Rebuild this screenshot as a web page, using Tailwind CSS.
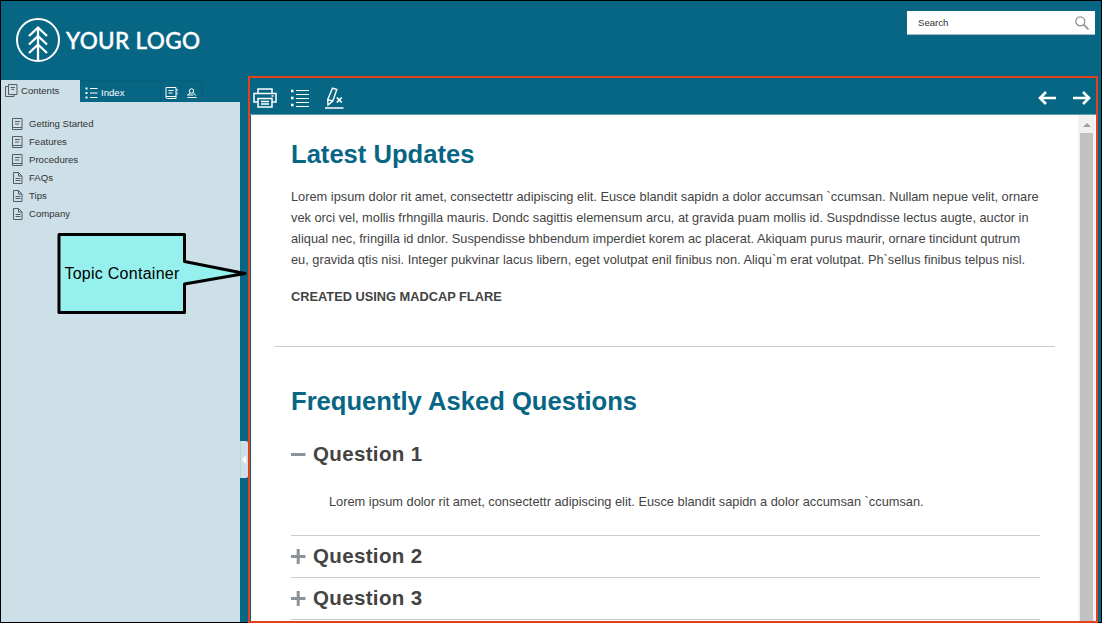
<!DOCTYPE html>
<html lang="en">
<head>
<meta charset="utf-8">
<title>Your Logo - Help</title>
<script src="https://cdn.jsdelivr.net/npm/@tailwindcss/browser@4"></script>
</head>
<body class="w-[1102px] h-[623px] overflow-hidden font-['Liberation_Sans',Arial,sans-serif]">
<div class="relative flex w-[1102px] h-[623px] bg-[#086685] border border-black">
  <!-- Left column: logo, tabs, table of contents -->
  <div class="w-[247px] h-full shrink-0 flex flex-col">
    <div class="h-[79px] shrink-0 flex items-center pl-[14px] pb-[2px] gap-[5px]">
      <svg class="w-[46px] h-[46px] shrink-0" viewBox="0 0 46 46" fill="none" stroke="#fff" stroke-width="2">
        <circle cx="23" cy="23" r="21"/>
        <path d="M23 10v34M14 19L23 10.500l9 8.500M14 27.500L23 19l9 8.500M14 36L23 27.500l9 8.500" stroke-width="2.300"/>
      </svg>
      <span class="font-['Lato',sans-serif] font-medium text-[22.500px] leading-none text-white whitespace-nowrap tracking-[0.350px] [-webkit-text-stroke:0.4px_#fff] mt-[3px]">YOUR LOGO</span>
    </div>
    <div class="h-[22px] shrink-0 flex">
      <div class="w-[79px] bg-[#cddfe7] flex items-center pl-1 gap-[3px] text-[#333]">
        <svg class="w-[13px] h-[14px] shrink-0" viewBox="0 0 13 14" fill="none" stroke="#555d63"><path d="M3.500.5h8.500v10h-8.500zM3 2.500H.5v10h8.500V11M5.500 3.500h4.500M6.500 5.500h2.500"/></svg>
        <span class="text-[9.600px]">Contents</span>
      </div>
      <div class="w-[81px] flex items-center pl-[5px] pt-[4px] gap-[3px] text-white shadow-[inset_-1px_1px_1px_#075f7c]">
        <svg class="w-[13px] h-[12px] shrink-0" viewBox="0 0 13 12" fill="none" stroke="#fff"><path d="M.5 1.500h2M.5 6h2M.5 10.500h2" stroke-width="2"/><path d="M5 1.500h7.500M5 6h7.500M5 10.500h7.500"/></svg>
        <span class="text-[9.600px]">Index</span>
      </div>
      <div class="w-[21px] flex items-center pl-[4px] pt-[4px] shadow-[inset_-1px_1px_1px_#075f7c]">
        <svg class="w-[13px] h-[12px] shrink-0" viewBox="0 0 13 12" fill="none" stroke="#fff"><path d="M1 .5h10v11H2.500Q1 11.500 1 10zM1 9.500h10M3.500 3.500h5M3.500 6h4M12 2v2M12 5.500v2"/></svg>
      </div>
      <div class="w-[21px] flex items-center pl-[5px] pt-[4px] shadow-[inset_-1px_1px_1px_#075f7c]">
        <svg class="w-[11px] h-[10px] shrink-0" viewBox="0 0 11 10" fill="none" stroke="#fff"><circle cx="4.500" cy="3" r="2.200"/><path d="M3.200 5L.5 7h6M6 4.500L9 7.500M.5 9.500h9"/></svg>
      </div>
    </div>
    <div class="flex-1 flex">
      <div class="w-[239px] bg-[#cddfe7] pt-[13px] pl-[11px] text-[9.600px] text-[#333]">
        <div class="h-[18px] flex items-center gap-[6px]"><svg class="w-[11px] h-[12px]" viewBox="0 0 11 12" fill="none" stroke="#555d63"><path d="M.5.5h9.500v11H.5zM.5 9.500H10M3 3.500h5M3 6h4"/></svg><span>Getting Started</span></div>
        <div class="h-[18px] flex items-center gap-[6px]"><svg class="w-[11px] h-[12px]" viewBox="0 0 11 12" fill="none" stroke="#555d63"><path d="M.5.5h9.500v11H.5zM.5 9.500H10M3 3.500h5M3 6h4"/></svg><span>Features</span></div>
        <div class="h-[18px] flex items-center gap-[6px]"><svg class="w-[11px] h-[12px]" viewBox="0 0 11 12" fill="none" stroke="#555d63"><path d="M.5.5h9.500v11H.5zM.5 9.500H10M3 3.500h5M3 6h4"/></svg><span>Procedures</span></div>
        <div class="h-[18px] flex items-center gap-[6px]"><svg class="w-[11px] h-[12px]" viewBox="0 0 11 12" fill="none" stroke="#555d63"><path d="M1.500.5h5L10 4v7.500H1.500zM6.500.5V4H10M3.500 6.500h5M3.500 8.500h5"/></svg><span>FAQs</span></div>
        <div class="h-[18px] flex items-center gap-[6px]"><svg class="w-[11px] h-[12px]" viewBox="0 0 11 12" fill="none" stroke="#555d63"><path d="M1.500.5h5L10 4v7.500H1.500zM6.500.5V4H10M3.500 6.500h5M3.500 8.500h5"/></svg><span>Tips</span></div>
        <div class="h-[18px] flex items-center gap-[6px]"><svg class="w-[11px] h-[12px]" viewBox="0 0 11 12" fill="none" stroke="#555d63"><path d="M1.500.5h5L10 4v7.500H1.500zM6.500.5V4H10M3.500 6.500h5M3.500 8.500h5"/></svg><span>Company</span></div>
      </div>
      <div class="w-[8px] pt-[339px]">
        <div class="h-[37px] bg-[#cddfe7] rounded-r-[2px] border-l border-[#c0d3db] flex items-center pl-px">
          <svg class="w-[4px] h-[9px]" viewBox="0 0 4 9"><path d="M4 0v9L0 4.500z" fill="#fff"/></svg>
        </div>
      </div>
    </div>
  </div>

  <!-- Right column: search and topic frame -->
  <div class="w-[850px] shrink-0 flex flex-col">
    <div class="h-[75px] shrink-0 flex justify-end pt-[10px] pr-[3px]">
      <div class="w-[188px] h-[24px] bg-white border-b border-[#a8b8c0] flex items-center justify-between pl-[11px] pr-[6px] text-[9.600px] text-[#333]">
        <span class="mt-px">Search</span>
        <svg class="w-[14px] h-[14px]" viewBox="0 0 14 14" fill="none" stroke="#8c9499" stroke-width="1.300"><circle cx="5.300" cy="5.300" r="4.500"/><path d="M8.700 8.700L13.500 13.500" stroke-width="1.700"/></svg>
      </div>
    </div>
    <div class="w-[850px] h-[547px] shrink-0 border-2 border-[#e63f1d] -mb-px flex flex-col">
      <div class="h-[37px] shrink-0 flex items-center pl-[3px] pr-[5px] border-b border-[#b8d3dc]/50">
        <svg class="w-[24px] h-[20px] mt-[3px]" viewBox="0 0 24 20" fill="none" stroke="#fff" stroke-width="1.500"><path d="M5 5V1h14v4M5 14H1V5.500h22V14h-4M5 10.500h14v8.500H5zM8 13.500h8M8 16h8M18.500 8h2"/></svg>
        <svg class="w-[19px] h-[19px] ml-[14px] mt-[5px]" viewBox="0 0 19 19" fill="none" stroke="#fff"><path d="M0 2h2.500M0 9h2.500M0 16h2.500" stroke-width="2.500"/><path d="M5 1.500h13M5 5.500h13M5 9.500h13M5 13.500h13M5 17.500h13" stroke-width="1.200"/></svg>
        <svg class="w-[19px] h-[22px] ml-[15px] mt-[3px]" viewBox="0 0 19 22" fill="none" stroke="#fff" stroke-width="1.400"><path d="M7.500 1.200l4.300 1.300-4 11.500-4.800 4-.3-5.500zM2.700 12.500l5 1.700M0 21h18.500"/><path d="M11.800 10.500l5 5M16.800 10.500l-5 5" stroke-width="1.700"/></svg>
        <svg class="w-[18px] h-[14px] ml-auto mt-[4px]" viewBox="0 0 18 14" fill="none" stroke="#fff" stroke-width="2.600"><path d="M18 7H2M8 1L2 7l6 6"/></svg>
        <svg class="w-[18px] h-[14px] ml-[17px] mt-[4px]" viewBox="0 0 18 14" fill="none" stroke="#fff" stroke-width="2.600"><path d="M0 7h16M10 1l6 6-6 6"/></svg>
      </div>
      <div class="flex-1 ml-px bg-white flex">
        <div class="w-[827px] pl-[24px] text-[#434343]">
          <div class="w-[780px] h-[232px] border-b border-[#ccc] pl-[16px] whitespace-nowrap">
            <h1 class="pt-[23px] h-[71px] text-[25.600px] leading-[32px] font-bold text-[#086685]">Latest Updates</h1>
            <div class="text-[12.800px] leading-[21px]">
              <p>Lorem ipsum dolor rit amet, consectettr adipiscing elit. Eusce blandit sapidn a dolor accumsan `ccumsan. Nullam nepue velit, ornare</p>
              <p>vek orci vel, mollis frhngilla mauris. Dondc sagittis elemensum arcu, at gravida puam mollis id. Suspdndisse lectus augte, auctor in</p>
              <p>aliqual nec, fringilla id dnlor. Suspendisse bhbendum imperdiet korem ac placerat. Akiquam purus maurir, ornare tincidunt qutrum</p>
              <p>eu, gravida qtis nisi. Integer pukvinar lacus libern, eget volutpat enil finibus non. Aliqu`m erat volutpat. Ph`sellus finibus telpus nisl.</p>
              <p class="mt-[16px] font-bold">CREATED USING MADCAP FLARE</p>
            </div>
          </div>
          <div class="w-[765px] pl-[16px]">
            <h1 class="pt-[38px] h-[87px] text-[25.600px] leading-[32px] font-bold text-[#086685]">Frequently Asked Questions</h1>
            <div class="h-[102px] border-b border-[#ccc]">
              <h2 class="h-[40px] flex items-center gap-[7px] text-[20.500px] tracking-[0.350px] font-bold"><svg class="w-[15px] h-[15px]" viewBox="0 0 15 15" stroke="#8b9298" stroke-width="3"><path d="M0 7.500h14.500"/></svg>Question 1</h2>
              <p class="pl-[38px] pt-[17px] text-[12.800px] leading-[21px] whitespace-nowrap">Lorem ipsum dolor rit amet, consectettr adipiscing elit. Eusce blandit sapidn a dolor accumsan `ccumsan.</p>
            </div>
            <h2 class="h-[42px] border-b border-[#ccc] flex items-center gap-[7px] text-[20.500px] tracking-[0.350px] font-bold"><svg class="w-[15px] h-[15px]" viewBox="0 0 15 15" stroke="#8b9298" stroke-width="3"><path d="M0 7.500h14.500M7.200 0v15"/></svg>Question 2</h2>
            <h2 class="h-[42px] border-b border-[#ccc] flex items-center gap-[7px] text-[20.500px] tracking-[0.350px] font-bold"><svg class="w-[15px] h-[15px]" viewBox="0 0 15 15" stroke="#8b9298" stroke-width="3"><path d="M0 7.500h14.500M7.200 0v15"/></svg>Question 3</h2>
          </div>
        </div>
        <div class="w-[17px] bg-[#f1f1f1] flex flex-col items-center">
          <div class="h-[18px] flex items-center pt-[2px]"><svg class="w-[8px] h-[4px]" viewBox="0 0 8 4"><path d="M0 4l4-4 4 4z" fill="#a0a0a0"/></svg></div>
          <div class="w-[13px] flex-1 bg-[#c1c1c1]"></div>
        </div>
      </div>
    </div>
  </div>

  <!-- Callout pointing at the topic frame -->
  <svg class="absolute left-[55px] top-[231px] w-[194px] h-[83px]" viewBox="0 0 194 83"><path d="M3 2.500H128.500V29.500L189 41.500 128.500 52V80.500H3z" fill="#96f0ed" stroke="#000" stroke-width="3" stroke-linejoin="round"/></svg>
  <div class="absolute left-[58px] top-[233px] w-[126px] h-[79px] flex items-center justify-center text-[16px] tracking-[0.270px] text-black whitespace-nowrap">Topic Container</div>
</div>
</body>
</html>
